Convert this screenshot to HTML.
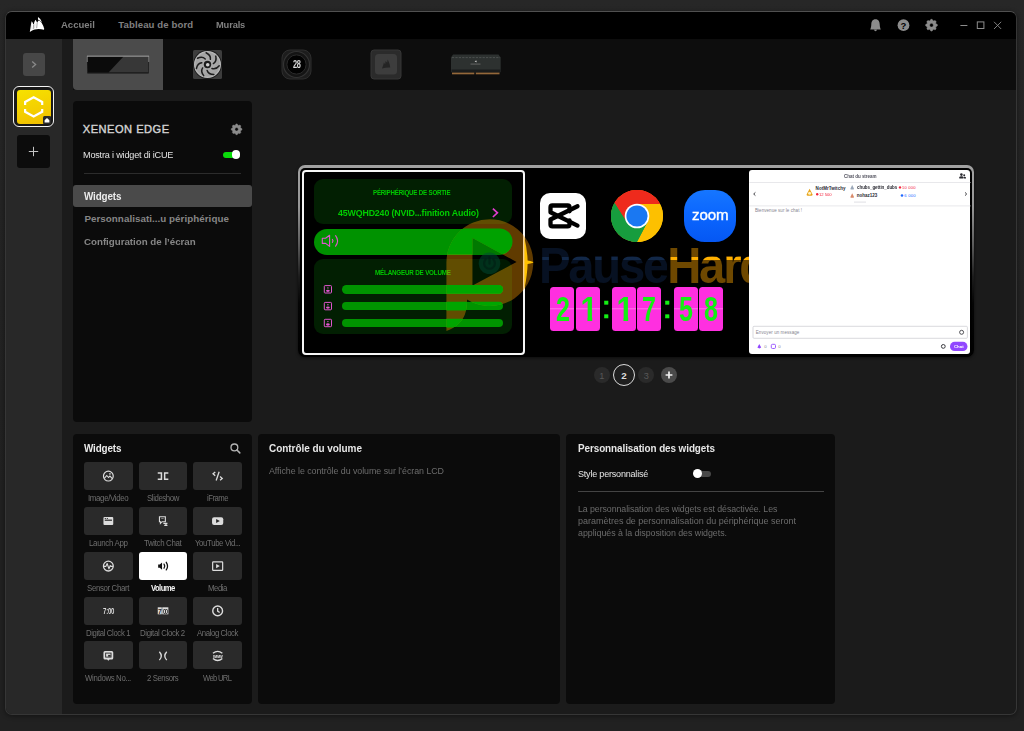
<!DOCTYPE html>
<html lang="fr">
<head>
<meta charset="utf-8">
<title>iCUE - XENEON EDGE</title>
<style>
*{box-sizing:border-box;margin:0;padding:0}
html,body{width:1024px;height:731px;overflow:hidden}
body{position:relative;background:linear-gradient(#272727 0,#242424 200px,#212121 500px,#212121 731px);font-family:"Liberation Sans",sans-serif;color:#fff}
.a{position:absolute}
.t{position:absolute;white-space:nowrap;transform-origin:0 50%}
#win{left:5.4px;top:11px;width:1011.6px;height:704px;border-radius:7px;background:#1b1b1b;border:1px solid #363636;border-top-color:#505050;overflow:hidden;box-shadow:0 1px 5px rgba(0,0,0,.45)}
#titlebar{left:0;top:0;width:1010px;height:27px;background:#000}
#sidebar{left:0;top:27px;width:55.6px;height:676px;background:#282828}
#tabs{left:66.6px;top:27px;width:944px;height:51px;background:#0d0d0d}
#tabsel{left:66.6px;top:27px;width:90px;height:51px;background:#4b4b4b;border-radius:0 0 0 4px}
.panel{background:#0b0b0b;border-radius:4px}
.tile{background:#2a2a2a;border-radius:3px;width:48.5px;height:28px}
.tile.sel{background:#fff}
svg{position:absolute;overflow:visible}
.fc{top:286.8px;width:24.1px;height:44.5px;border-radius:3.5px;background:linear-gradient(#ff2fe0 0,#ff2fe0 48%,#ff6ae8 49%,#ff6ae8 50.5%,#ff2fe0 51.5%,#ff2fe0 100%)}
.dg{position:absolute;top:291.6px;margin-left:.4px;width:24.2px;white-space:nowrap;color:#14ee14;font-weight:700;font-size:35.8px;line-height:1;transform-origin:50% 50%;transform:scaleX(.70);text-align:center}
.dg.one{transform:scaleX(.86);clip-path:polygon(0 0,100% 0,100% 25.3px,15.7px 25.3px,15.7px 100%,10.2px 100%,10.2px 25.3px,0 25.3px)}
.wm{font-weight:700;font-size:49.7px;line-height:1;letter-spacing:-2.3px;white-space:nowrap;width:400px;height:50px;transform:scaleX(.95);transform-origin:0 50%}
.wp{color:transparent;background:linear-gradient(#071122 0,#071122 18.5px,#122848 19px,#122848 21.6px,#071122 22.1px,#071122 50px);-webkit-background-clip:text;background-clip:text}
.wh{color:transparent;background:linear-gradient(#6e4800 0,#6e4800 18.5px,#ffb000 19px,#ffb000 21.6px,#6e4800 22.1px,#6e4800 50px);-webkit-background-clip:text;background-clip:text}

</style>
</head>
<body>
<!-- ============ iCUE window chrome ============ -->
<div id="win" class="a">
  <div id="titlebar" class="a"></div>
  <div id="sidebar" class="a"></div>
  <div id="tabs" class="a"></div>
  <div id="tabsel" class="a"></div>
</div>

<!-- ============ title bar ============ -->
<header>
<!-- title bar: logo + window controls -->
<svg style="left:0;top:0" width="1024" height="40" viewBox="0 0 1024 40">
  <g fill="#fff">
    <path d="M29.8 32 L30.9 25 L31.6 21.2 Q32.8 22.4 33.3 24.3 L33.9 24 Q34.3 21.6 35.4 19.7 Q36.5 20.8 37 22.4 L37.4 22.5 Q37.8 21.4 38.5 20.5 Q40.4 21 41.6 22.8 Q43.3 25.5 44.2 28.8 L44 29.8 Q39 28.5 34.6 29.5 Q32 30.3 29.8 32 Z"/>
    <path d="M38 17 Q40.8 18.6 42.1 22.4 Q40 20.6 38.2 19.8 Q37.8 18.4 38 17 Z"/>
  </g>
  <path d="M33.7 24.4 L33.2 29.2 M37.2 22.8 L36.7 28.2" stroke="#000" stroke-opacity=".6" stroke-width=".6" fill="none"/>
  <path d="M31.2 24.4 L30.9 29.6 M35 23.4 L34.7 28.4" stroke="#000" stroke-opacity=".3" stroke-width=".5" fill="none"/>
  <!-- bell -->
  <path d="M875.5 19.3 C878.4 19.3 879.6 21.6 879.7 24.2 C879.8 26.6 880.2 28 880.8 29.4 H870.2 C870.8 28 871.2 26.6 871.3 24.2 C871.4 21.6 872.6 19.3 875.5 19.3 Z M874.1 29.8 H876.9 C876.8 30.7 876.2 31.2 875.5 31.2 C874.8 31.2 874.2 30.7 874.1 29.8 Z" fill="#8c8c8c"/>
  <!-- help -->
  <circle cx="903.5" cy="25.2" r="5.9" fill="#8c8c8c"/>
  <!-- gear -->
  <g transform="translate(931.5 25.2)" fill="#8c8c8c" stroke="#8c8c8c" stroke-width=".5" stroke-linejoin="round">
    <path fill-rule="evenodd" d="M-0.62 -5.87 L0.62 -5.87 L1.72 -4.16 L3.71 -4.59 L4.59 -3.71 L4.16 -1.72 L5.87 -0.62 L5.87 0.62 L4.16 1.72 L4.59 3.71 L3.71 4.59 L1.72 4.16 L0.62 5.87 L-0.62 5.87 L-1.72 4.16 L-3.71 4.59 L-4.59 3.71 L-4.16 1.72 L-5.87 0.62 L-5.87 -0.62 L-4.16 -1.72 L-4.59 -3.71 L-3.71 -4.59 L-1.72 -4.16 Z M0 -1.9 A1.9 1.9 0 1 0 0 1.9 A1.9 1.9 0 1 0 0 -1.9 Z"/>
  </g>
  <!-- window controls -->
  <path d="M960.4 25.5 H967.4" stroke="#8c8c8c" stroke-width="1"/>
  <rect x="977.3" y="21.9" width="6.6" height="6.6" fill="none" stroke="#8c8c8c" stroke-width="1"/>
  <path d="M994 21.8 L1001.2 29 M1001.2 21.8 L994 29" stroke="#8c8c8c" stroke-width=".9"/>
</svg>
<nav>
<a class="t" style="left:61.30px;top:20px;color:#808080;font-family:'Liberation Sans', sans-serif;font-size:9.6px;font-weight:700;letter-spacing:-0.026px;white-space:nowrap;line-height:1;transform:scaleX(0.9945);">Accueil</a>
<a class="t" style="left:118.30px;top:20px;color:#808080;font-family:'Liberation Sans', sans-serif;font-size:9.6px;font-weight:700;letter-spacing:0.101px;white-space:nowrap;line-height:1;">Tableau de bord</a>
<a class="t" style="left:216.30px;top:20px;color:#808080;font-family:'Liberation Sans', sans-serif;font-size:9.6px;font-weight:700;letter-spacing:-0.152px;white-space:nowrap;line-height:1;transform:scaleX(0.9709);">Murals</a>
</nav>
<span class="t" style="left:900.59px;top:21px;color:#000;font-family:'Liberation Sans', sans-serif;font-size:9.5px;font-weight:700;letter-spacing:0.000px;white-space:nowrap;line-height:1;">?</span>
</header>

<!-- ============ left rail ============ -->
<aside>
<!-- sidebar buttons -->
<div class="a" style="left:23px;top:53px;width:22px;height:23px;border-radius:3px;background:#474747"></div>
<svg style="left:23px;top:53px" width="22" height="23" viewBox="0 0 22 23"><path d="M9.2 8.6 L12.6 11.5 L9.2 14.4" fill="none" stroke="#8a8a8a" stroke-width="1.3"/></svg>
<div class="a" style="left:13px;top:85.7px;width:41.1px;height:41.4px;border-radius:6px;border:1.7px solid #f4f4f4;background:#191919"></div>
<div class="a" style="left:17px;top:89.7px;width:34px;height:34px;border-radius:3px;background:linear-gradient(165deg,#f6e200 0%,#f4cf00 55%,#f0bd00 100%)"></div>
<svg style="left:17px;top:89.7px" width="34" height="34" viewBox="0 0 34 34">
  <path d="M8.1 14.9 V12 L16.65 7.3 L25.2 12 V14.9 M25.2 18.9 V21.8 L16.65 26.5 L8.1 21.8 V18.9" fill="none" stroke="#fff" stroke-width="2.2" stroke-linejoin="miter"/>
  <path d="M26 34 L34 26 V31 Q34 34 31 34 Z" fill="#2a2a2a"/>
  <rect x="26" y="26" width="8" height="8" rx="1.5" fill="#2a2a2a"/>
  <path d="M27.6 30.2 L30 28 L32.4 30.2 V32.6 H27.6 Z" fill="#fff"/>
</svg>
<div class="a" style="left:17px;top:135px;width:33px;height:33px;border-radius:3px;background:#0c0c0c"></div>
<svg style="left:17px;top:135px" width="33" height="33" viewBox="0 0 33 33"><path d="M16.5 11.8 V21.2 M11.8 16.5 H21.2" stroke="#c4c4c4" stroke-width="1"/></svg>
</aside>

<!-- ============ device tabs ============ -->
<nav>
<!-- device tabs -->
<svg style="left:0;top:39px" width="1024" height="51" viewBox="0 39 1024 51">
  <defs>
    <radialGradient id="fan" cx=".5" cy=".5" r=".5"><stop offset="0" stop-color="#b0b0b0"/><stop offset=".85" stop-color="#a2a2a2"/><stop offset="1" stop-color="#c0c0c0"/></radialGradient>
  </defs>
  <!-- XENEON EDGE monitor -->
  <path d="M87 56 H149 L148.6 73.3 H87.4 Z" fill="#0b0b0b"/>
  <path d="M123.5 56.6 H148.6 L148.2 72.6 H108.5 Z" fill="#373737"/>
  <path d="M87 56.2 H149" stroke="#b8b8b8" stroke-width=".9"/>
  <path d="M87.3 56 V62 M148.7 56 V62" stroke="#999" stroke-width=".7"/>
  <path d="M87.4 73 H148.6" stroke="#222" stroke-width=".9"/>
  <!-- fan -->
  <rect x="193" y="50" width="29" height="29" rx="1.5" fill="#3d3d3d"/>
  <circle cx="207.5" cy="64.5" r="14.4" fill="#1b1b1b"/>
  <circle cx="207.5" cy="64.5" r="13.5" fill="url(#fan)"/>
  <g transform="translate(207.5 64.5)" fill="none" stroke="#1d1d1d" stroke-width="1.5" stroke-linecap="round">
    <path d="M-1.4 -11.7 Q3.4 -9.4 2.9 -5.2" transform="rotate(0.0)"/>
    <path d="M-1.4 -11.7 Q3.4 -9.4 2.9 -5.2" transform="rotate(51.4)"/>
    <path d="M-1.4 -11.7 Q3.4 -9.4 2.9 -5.2" transform="rotate(102.9)"/>
    <path d="M-1.4 -11.7 Q3.4 -9.4 2.9 -5.2" transform="rotate(154.3)"/>
    <path d="M-1.4 -11.7 Q3.4 -9.4 2.9 -5.2" transform="rotate(205.7)"/>
    <path d="M-1.4 -11.7 Q3.4 -9.4 2.9 -5.2" transform="rotate(257.1)"/>
    <path d="M-1.4 -11.7 Q3.4 -9.4 2.9 -5.2" transform="rotate(308.6)"/>
  </g>
  <circle cx="207.5" cy="64.5" r="3.7" fill="#1c1c1c"/>
  <circle cx="207.7" cy="64.7" r="1.8" fill="#d0d0d0"/>
  <!-- LCD cooler -->
  <rect x="282" y="50" width="29" height="29" rx="8" fill="#1d1d1d" stroke="#2e2e2e" stroke-width="1"/>
  <circle cx="296.5" cy="64.5" r="13" fill="#141414" stroke="#333" stroke-width="1.2"/>
  <circle cx="296.5" cy="64.5" r="9.6" fill="#020202" stroke="#2a2a2a" stroke-width="1"/>
  <!-- keycap -->
  <rect x="371" y="50" width="30" height="29" rx="3" fill="#2b2b2b" stroke="#363636" stroke-width="1"/>
  <rect x="375" y="54" width="22" height="20.5" rx="3.5" fill="#3d3d3d"/>
  <path d="M382 68.5 C383 66 383.5 64.5 383.8 62.5 L385.2 64.2 L385.6 61 L387.2 62.8 L387.6 59.6 C389.2 62 390 65 390.2 67.6 C387.5 67.4 384.5 67.8 382 68.5 Z" fill="#242424"/>
  <!-- RAM -->
  <path d="M453 54.5 H498.5 L500.7 57.5 V72 H451 V57.5 Z" fill="#2d3130"/>
  <path d="M452 57.6 H500" stroke="#4c504f" stroke-width="1" stroke-dasharray="2.2 1.2"/>
  <rect x="451.5" y="69.5" width="49" height="3.2" fill="#1a1c1c"/>
  <rect x="452" y="72.6" width="22.3" height="1.7" fill="#94683a"/>
  <rect x="475.8" y="72.6" width="23.7" height="1.7" fill="#94683a"/>
  <path d="M474.6 61.8 l1.6 -1.5 l.7 2 z" fill="#c4c4c4"/>
  <rect x="470.5" y="63.7" width="10" height=".7" fill="#7a7a7a"/>
</svg>
<span class="t" style="left:292.70px;top:59px;color:#d8d8d8;font-family:'Liberation Sans', sans-serif;font-size:10.8px;font-weight:700;letter-spacing:-0.616px;white-space:nowrap;line-height:1;transform:scaleX(0.6842);">28</span>
</nav>

<!-- ============ device menu panel ============ -->
<section>
<div class="a panel" style="left:73px;top:101px;width:179px;height:321px"></div>
<div class="a" style="left:83.5px;top:173px;width:157px;height:1px;background:#2c2c2c"></div>
<div class="a" style="left:73px;top:185px;width:179px;height:22px;border-radius:3px;background:#4a4a4a"></div>
<div class="a" style="left:223px;top:151.5px;width:17px;height:6px;border-radius:3px;background:#0adc0a"></div>
<div class="a" style="left:231.8px;top:150.1px;width:8.6px;height:8.7px;border-radius:50%;background:#fff"></div>
<svg style="left:0;top:0" width="1024" height="731" viewBox="0 0 1024 731">
  <g transform="translate(236.6 129.3) scale(.92)" fill="#8a8a8a" stroke="#8a8a8a" stroke-width=".5" stroke-linejoin="round">
    <path fill-rule="evenodd" d="M-0.62 -5.87 L0.62 -5.87 L1.72 -4.16 L3.71 -4.59 L4.59 -3.71 L4.16 -1.72 L5.87 -0.62 L5.87 0.62 L4.16 1.72 L4.59 3.71 L3.71 4.59 L1.72 4.16 L0.62 5.87 L-0.62 5.87 L-1.72 4.16 L-3.71 4.59 L-4.59 3.71 L-4.16 1.72 L-5.87 0.62 L-5.87 -0.62 L-4.16 -1.72 L-4.59 -3.71 L-3.71 -4.59 L-1.72 -4.16 Z M0 -1.9 A1.9 1.9 0 1 0 0 1.9 A1.9 1.9 0 1 0 0 -1.9 Z"/>
  </g>
</svg>
<h1 class="t" style="left:82.80px;top:124px;color:#d4d4d4;font-family:'Liberation Sans', sans-serif;font-size:11.1px;font-weight:400;letter-spacing:0.492px;white-space:nowrap;line-height:1;-webkit-text-stroke:.4px #d4d4d4;">XENEON EDGE</h1>
<label class="t" style="left:82.60px;top:150px;color:#e4e4e4;font-family:'Liberation Sans', sans-serif;font-size:9.6px;font-weight:400;letter-spacing:-0.201px;white-space:nowrap;line-height:1;transform:scaleX(0.9487);">Mostra i widget di iCUE</label>
<a class="t" style="left:84.20px;top:192px;color:#ececec;font-family:'Liberation Sans', sans-serif;font-size:10.1px;font-weight:700;letter-spacing:-0.128px;white-space:nowrap;line-height:1;transform:scaleX(0.9765);">Widgets</a>
<a class="t" style="left:84.40px;top:214px;color:#868686;font-family:'Liberation Sans', sans-serif;font-size:9.8px;font-weight:700;letter-spacing:0.044px;white-space:nowrap;line-height:1;">Personnalisati...u périphérique</a>
<a class="t" style="left:84.40px;top:237px;color:#868686;font-family:'Liberation Sans', sans-serif;font-size:9.8px;font-weight:700;letter-spacing:-0.019px;white-space:nowrap;line-height:1;transform:scaleX(0.9952);">Configuration de l’écran</a>
</section>

<!-- ============ screen preview ============ -->
<main>
<!-- preview frame -->
<div class="a" style="left:298.2px;top:165.1px;width:675.8px;height:192.2px;border-radius:7px;background:linear-gradient(#a2a2a2 0,#969696 22%,#5a5a5a 42%,#1c1c1c 58%,#050505 72%,#000 100%);box-shadow:0 1px 3px rgba(0,0,0,.55)"></div>
<div class="a" style="left:300.2px;top:167.5px;width:671.8px;height:189.3px;border-radius:5px;background:#000"></div>

<!-- ===== preview: widget 1 (volume) ===== -->
<div class="a" style="left:314.2px;top:179px;width:198.3px;height:44.5px;border-radius:9px;background:#021f02"></div>
<div class="a" style="left:314.2px;top:228.5px;width:198.3px;height:26px;border-radius:13px;background:#009200"></div>
<div class="a" style="left:314.2px;top:259px;width:198.3px;height:75px;border-radius:9px;background:#021f02"></div>
<div class="a" style="left:342.3px;top:285px;width:160.8px;height:8.7px;border-radius:4.4px;background:#009400"></div>
<div class="a" style="left:342.3px;top:301.8px;width:160.8px;height:8.7px;border-radius:4.4px;background:#009400"></div>
<div class="a" style="left:342.3px;top:318.7px;width:160.8px;height:8.7px;border-radius:4.4px;background:#009400"></div>
<svg style="left:0;top:0" width="1024" height="731" viewBox="0 0 1024 731">
  <!-- speaker -->
  <g fill="none" stroke="#e255cf" stroke-width="1.1" stroke-linejoin="round" stroke-linecap="round">
    <path d="M322.3 238.3 H325.6 L329.6 235.3 V246.4 L325.6 243.4 H322.3 Z"/>
    <path d="M332.4 239.4 Q333.6 240.9 332.4 242.4"/>
    <path d="M335.6 235.6 Q339.6 240.9 335.6 246.2"/>
  </g>
  <!-- chevron -->
  <path d="M492.9 208.6 L497.4 212.8 L492.9 217" fill="none" stroke="#e23ccf" stroke-width="1.7"/>
  <!-- mixer app icons -->
  <g fill="none" stroke="#e255cf" stroke-width="1">
    <rect x="324.3" y="285.6" width="7.2" height="7.4" rx=".8"/>
    <rect x="324.3" y="302.4" width="7.2" height="7.4" rx=".8"/>
    <rect x="324.3" y="319.3" width="7.2" height="7.4" rx=".8"/>
  </g>
  <g fill="#e255cf">
    <circle cx="327.9" cy="287.9" r=".7"/><ellipse cx="327.9" cy="290.8" rx="1.9" ry="1.15"/>
    <circle cx="327.9" cy="304.7" r=".7"/><ellipse cx="327.9" cy="307.6" rx="1.9" ry="1.15"/>
    <circle cx="327.9" cy="321.6" r=".7"/><ellipse cx="327.9" cy="324.5" rx="1.9" ry="1.15"/>
  </g>
</svg>
<div class="t" style="left:373.45px;top:190px;color:#00c800;font-family:'Liberation Sans', sans-serif;font-size:6.6px;font-weight:700;letter-spacing:-0.221px;white-space:nowrap;line-height:1;transform:scaleX(0.9388);">PÉRIPHÉRIQUE DE SORTIE</div>
<div class="t" style="left:338.30px;top:209px;color:#00cc00;font-family:'Liberation Sans', sans-serif;font-size:9.2px;font-weight:700;letter-spacing:-0.158px;white-space:nowrap;line-height:1;transform:scaleX(0.9610);">45WQHD240 (NVID...finition Audio)</div>
<div class="t" style="left:375.30px;top:270px;color:#00c800;font-family:'Liberation Sans', sans-serif;font-size:6.6px;font-weight:700;letter-spacing:-0.198px;white-space:nowrap;line-height:1;transform:scaleX(0.9504);">MÉLANGEUR DE VOLUME</div>
<!-- selected widget outline -->
<div class="a" style="left:302px;top:169.6px;width:223px;height:185.2px;border-radius:4px;border:2px solid #f6f6f6"></div>

<!-- ===== preview: widget 2 (apps + flip clock) ===== -->
<div class="a" style="left:540px;top:192.5px;width:46.3px;height:46.3px;border-radius:10px;background:#fff"></div>
<svg style="left:539.4px;top:192.5px" width="46.3" height="46.3" viewBox="0 0 46.3 46.3">
  <g fill="none" stroke="#000" stroke-width="4.3" stroke-linejoin="round" stroke-linecap="round">
    <path d="M38.5 13.2 L11.5 26.5 V31.5 Q11.5 33.3 13.3 33.3 H28.7 Q30.5 33.3 30.5 31.5 V27.5"/>
    <path d="M38.5 32.6 L11.5 19.3 V14.3 Q11.5 12.5 13.3 12.5 H28.7 Q30.5 12.5 30.5 14.3 V18.3"/>
  </g>
</svg>
<svg style="left:611px;top:189.7px" width="52" height="52" viewBox="-26 -26 52 52">
  <circle r="26" fill="#fdc000"/>
  <path d="M0 0 L-22.52 -13 A26 26 0 0 1 22.52 -13 Z" fill="#ee2a1c"/>
  <path d="M0 0 L-22.52 -13 A26 26 0 0 0 0 26 L12 5 Z" fill="#179d3e"/>
  <path d="M0 0 L22.52 -13 H0 Z" fill="#ee2a1c"/>
  <path d="M-22.52 -13 L-10.4 8 L0 0 Z" fill="#179d3e"/>
  <path d="M0 -12 H23.1 A26 26 0 0 1 0 26 L10.4 6 Z" fill="#fdc000"/>
  <path d="M0 -12 L-10.4 6 L-22.52 -13 A26 26 0 0 1 22.52 -13 L23.1 -12 Z" fill="#ee2a1c"/>
  <path d="M-10.4 6 L10.4 6 L0 26 A26 26 0 0 1 -22.52 -13 Z" fill="#179d3e"/>
  <circle r="12.3" fill="#fff"/>
  <circle r="10.6" fill="#1a78f2"/>
</svg>
<div class="a" style="left:683.7px;top:190px;width:52.5px;height:52px;border-radius:21px;background:linear-gradient(#1676ff,#0b67ff 45%,#0557f3)"></div>

<!-- flip clock -->
<div class="a fc" style="left:550.4px"></div><div class="a fc" style="left:575.7px"></div>
<div class="a fc" style="left:612px"></div><div class="a fc" style="left:637.1px"></div>
<div class="a fc" style="left:673.5px"></div><div class="a fc" style="left:698.9px"></div>

<div class="dg" style="left:550.4px">2</div>
<div class="dg one" style="left:576.6px">1</div>
<div class="dg one" style="left:612.9px">1</div>
<div class="dg" style="left:637.1px">7</div>
<div class="dg" style="left:673.5px">5</div>
<div class="dg" style="left:698.9px">8</div>
<span class="t" style="left:601.90px;top:293px;color:#15ee15;font-family:'Liberation Sans', sans-serif;font-size:30.9px;font-weight:400;letter-spacing:0.000px;white-space:nowrap;line-height:1;transform:scaleX(1.22);transform-origin:50% 50%;-webkit-text-stroke:.4px #15ee15;">:</span>
<span class="t" style="left:663.40px;top:293px;color:#15ee15;font-family:'Liberation Sans', sans-serif;font-size:30.9px;font-weight:400;letter-spacing:0.000px;white-space:nowrap;line-height:1;transform:scaleX(1.22);transform-origin:50% 50%;-webkit-text-stroke:.4px #15ee15;">:</span>
<span class="t" style="left:691.80px;top:207px;color:#fff;font-family:'Liberation Sans', sans-serif;font-size:15.3px;font-weight:400;letter-spacing:-0.122px;white-space:nowrap;line-height:1;transform:scaleX(0.9881);-webkit-text-stroke:.4px #fff;">zoom</span>

<!-- ===== watermark (PauseHardware) ===== -->
<svg style="left:0;top:0;z-index:5" width="1024" height="731" viewBox="0 0 1024 731">
  <defs>
    <clipPath id="wmP"><path clip-rule="evenodd" d="M489.8 219.2 A43.4 43.4 0 1 1 467 299.5 C467 312 465 324 446.4 331 V262.6 A43.4 43.4 0 0 1 489.8 219.2 Z M472.5 238 V285.5 L516.5 262 Z"/></clipPath>
    <clipPath id="wmIn"><rect x="299" y="165" width="451" height="192"/></clipPath>
  </defs>
  <g clip-path="url(#wmIn)">
    <g clip-path="url(#wmP)">
      <rect x="440" y="215" width="100" height="120" fill="#f09400" fill-opacity=".4"/>
      <!-- brighter greens where the mark crosses the volume bars -->
      <rect x="314.2" y="228.5" width="198.3" height="26" rx="13" fill="#00a200"/>
      <rect x="342.3" y="285" width="160.8" height="8.7" rx="4.35" fill="#00a600"/>
      <rect x="342.3" y="301.8" width="160.8" height="8.7" rx="4.35" fill="#00a600"/>
      <rect x="342.3" y="318.7" width="160.8" height="8.7" rx="4.35" fill="#00a600"/>
      <path d="M524.4 237.5 Q527.4 251 527.6 260.6 Q530 260.9 534.5 262.3 Q530 263.7 527.6 264 Q527.4 274 524.4 289 Z" fill="#ffc200"/>
    </g>
    <path d="M472.5 238 V285.5 L516.5 262 Z" fill="#000" fill-opacity=".17"/>
    <circle cx="489.5" cy="263.3" r="10.8" fill="#004a36" fill-opacity=".5"/>
    <path d="M485.6 259.6 A5.4 5.4 0 1 0 493.4 259.6 M489.5 257.4 V263.6" fill="none" stroke="#001c12" stroke-opacity=".55" stroke-width="2.2" stroke-linecap="round"/>
  </g>
</svg>
<div class="a wm" style="left:538.8px;top:242px;z-index:5"><span class="wp">Pause</span><span class="wh">Hardware</span></div>

<!-- ===== preview: widget 3 (Twitch chat) ===== -->
<div class="a" style="left:749.3px;top:169.8px;width:221.2px;height:184.2px;border-radius:3px;background:#fff;z-index:6"></div>
<svg style="left:0;top:0;z-index:7" width="1024" height="731" viewBox="0 0 1024 731">
  <path d="M749.3 182.5 H970.5 M749.3 205.9 H970.5" stroke="#e2e2e6" stroke-width=".8"/>
  <path d="M854 202.1 H866" stroke="#d2d2d8" stroke-width=".7"/>
  <!-- community icon -->
  <g fill="#2a2a30"><circle cx="961.4" cy="174.6" r="1.3"/><path d="M959.3 178.4 V177.3 Q959.3 176.3 961.4 176.3 Q963.5 176.3 963.5 177.3 V178.4 Z"/><circle cx="964.2" cy="175.2" r="1"/><path d="M964 178.4 V176.8 Q966 176.7 966 177.8 V178.4 Z"/></g>
  <!-- arrows -->
  <path d="M755.4 192.4 L753.7 194 L755.4 195.6" fill="none" stroke="#2a2a30" stroke-width=".9"/>
  <path d="M965 192.4 L966.7 194 L965 195.6" fill="none" stroke="#2a2a30" stroke-width=".9"/>
  <!-- badges -->
  <path d="M809.6 188.8 L812.6 194.6 Q812.8 195.7 811.6 195.8 H807.6 Q806.4 195.7 806.6 194.6 Z" fill="#e8a317"/>
  <circle cx="809.6" cy="193.3" r="1.5" fill="#fff4c8"/>
  <path d="M852.2 185 L854 188.7 Q854.1 189.5 853.3 189.5 H851.1 Q850.3 189.5 850.4 188.7 Z" fill="#9aa7b8"/>
  <path d="M852.2 193.2 L854 196.9 Q854.1 197.7 853.3 197.7 H851.1 Q850.3 197.7 850.4 196.9 Z" fill="#d98a6a"/>
  <!-- bits dots -->
  <circle cx="817.2" cy="194.3" r="1.2" fill="#f3253f"/>
  <circle cx="900" cy="187.4" r="1.2" fill="#f3253f"/>
  <circle cx="902" cy="195.5" r="1.3" fill="#1f69ff"/>
  <!-- input -->
  <rect x="753" y="326.3" width="214.4" height="12" rx="1" fill="#fff" stroke="#c8c8cf" stroke-width=".7"/>
  <circle cx="961.6" cy="332.3" r="2" fill="none" stroke="#2a2a30" stroke-width=".8"/>
  <!-- bottom row -->
  <path d="M759.3 344 L761.2 347.4 L759.3 348.6 L757.4 347.4 Z" fill="#9147ff"/>
  <rect x="771.3" y="344.3" width="4.2" height="4.2" rx="1.2" fill="none" stroke="#9147ff" stroke-width=".9"/>
  <circle cx="943.3" cy="346.4" r="1.9" fill="none" stroke="#3a3a40" stroke-width="1"/>
  <rect x="950" y="341.8" width="17.5" height="9.2" rx="4.6" fill="#9147ff"/>
</svg>
<div class="t" style="left:843.80px;top:175px;color:#53535f;font-family:'Liberation Sans', sans-serif;font-size:4.6px;font-weight:700;letter-spacing:-0.030px;white-space:nowrap;line-height:1;transform:scaleX(0.9860);z-index:7;">Chat du stream</div>
<span class="t" style="left:815.60px;top:187px;color:#2a2a33;font-family:'Liberation Sans', sans-serif;font-size:4.5px;font-weight:700;letter-spacing:0.043px;white-space:nowrap;line-height:1;z-index:7;">NotMrTwitchy</span>
<span class="t" style="left:819.20px;top:193px;color:#f3253f;font-family:'Liberation Sans', sans-serif;font-size:4.2px;font-weight:400;letter-spacing:-0.019px;white-space:nowrap;line-height:1;transform:scaleX(0.9909);z-index:7;">12 500</span>
<span class="t" style="left:856.70px;top:186px;color:#2a2a33;font-family:'Liberation Sans', sans-serif;font-size:4.5px;font-weight:700;letter-spacing:-0.028px;white-space:nowrap;line-height:1;transform:scaleX(0.9871);z-index:7;">chubs_gettin_dubs</span>
<span class="t" style="left:902.00px;top:186px;color:#f3253f;font-family:'Liberation Sans', sans-serif;font-size:4.2px;font-weight:400;letter-spacing:0.157px;white-space:nowrap;line-height:1;z-index:7;">10 000</span>
<span class="t" style="left:856.70px;top:194px;color:#2a2a33;font-family:'Liberation Sans', sans-serif;font-size:4.5px;font-weight:700;letter-spacing:0.026px;white-space:nowrap;line-height:1;z-index:7;">nohaz123</span>
<span class="t" style="left:904.30px;top:194px;color:#1f69ff;font-family:'Liberation Sans', sans-serif;font-size:4.2px;font-weight:400;letter-spacing:0.204px;white-space:nowrap;line-height:1;z-index:7;">6 000</span>
<p class="t" style="left:755.00px;top:209px;color:#85858f;font-family:'Liberation Sans', sans-serif;font-size:4.5px;font-weight:400;letter-spacing:0.055px;white-space:nowrap;line-height:1;z-index:7;">Bienvenue sur le chat !</p>
<span class="t" style="left:755.80px;top:331px;color:#85858f;font-family:'Liberation Sans', sans-serif;font-size:4.5px;font-weight:400;letter-spacing:0.072px;white-space:nowrap;line-height:1;z-index:7;">Envoyer un message</span>
<span class="t" style="left:764.20px;top:345px;color:#85858f;font-family:'Liberation Sans', sans-serif;font-size:4.3px;font-weight:400;letter-spacing:0.000px;white-space:nowrap;line-height:1;z-index:7;">0</span>
<span class="t" style="left:778.30px;top:345px;color:#85858f;font-family:'Liberation Sans', sans-serif;font-size:4.3px;font-weight:400;letter-spacing:0.000px;white-space:nowrap;line-height:1;z-index:7;">0</span>
<span class="t" style="left:954.00px;top:345px;color:#fff;font-family:'Liberation Sans', sans-serif;font-size:4.4px;font-weight:700;letter-spacing:-0.025px;white-space:nowrap;line-height:1;transform:scaleX(0.9907);z-index:7;">Chat</span>
</main>

<nav>
<!-- ===== pager ===== -->
<div class="a" style="left:593.7px;top:367.3px;width:16px;height:16px;border-radius:50%;background:#2a2a2a"></div>
<div class="a" style="left:612.9px;top:364.2px;width:22.2px;height:22.2px;border-radius:50%;background:#1f1f1f;border:1.1px solid #dadada"></div>
<div class="a" style="left:638.4px;top:367.3px;width:16px;height:16px;border-radius:50%;background:#2a2a2a"></div>
<div class="a" style="left:660.7px;top:367.3px;width:16px;height:16px;border-radius:50%;background:#4a4a4a"></div>
<svg style="left:660.7px;top:367.3px" width="16" height="16" viewBox="0 0 16 16"><path d="M8 4.6 V11.4 M4.6 8 H11.4" stroke="#f0f0f0" stroke-width="1.7"/></svg>
<span class="t" style="left:599.14px;top:372px;color:#585858;font-family:'Liberation Sans', sans-serif;font-size:9.2px;font-weight:400;letter-spacing:0.000px;white-space:nowrap;line-height:1;">1</span>
<span class="t" style="left:621.27px;top:371px;color:#dcdcdc;font-family:'Liberation Sans', sans-serif;font-size:9.8px;font-weight:700;letter-spacing:0.000px;white-space:nowrap;line-height:1;">2</span>
<span class="t" style="left:643.84px;top:372px;color:#585858;font-family:'Liberation Sans', sans-serif;font-size:9.2px;font-weight:400;letter-spacing:0.000px;white-space:nowrap;line-height:1;">3</span>
</nav>

<!-- ============ widget picker ============ -->
<section>
<div class="a panel" style="left:73px;top:434px;width:179px;height:269.5px"></div>
<svg style="left:0;top:0" width="1024" height="731" viewBox="0 0 1024 731">
  <circle cx="234.4" cy="447.4" r="3.4" fill="none" stroke="#b4b4b4" stroke-width="1.3"/>
  <path d="M236.9 450 L239.8 452.9" stroke="#b4b4b4" stroke-width="1.5" stroke-linecap="round"/>
</svg>
<!-- ===== widget tiles ===== -->
<div class="a tile" style="left:84.1px;top:462.1px"></div>
<div class="a tile" style="left:138.8px;top:462.1px"></div>
<div class="a tile" style="left:193.4px;top:462.1px"></div>
<div class="a tile" style="left:84.1px;top:507.0px"></div>
<div class="a tile" style="left:138.8px;top:507.0px"></div>
<div class="a tile" style="left:193.4px;top:507.0px"></div>
<div class="a tile" style="left:84.1px;top:551.9px"></div>
<div class="a tile sel" style="left:138.8px;top:551.9px"></div>
<div class="a tile" style="left:193.4px;top:551.9px"></div>
<div class="a tile" style="left:84.1px;top:596.7px"></div>
<div class="a tile" style="left:138.8px;top:596.7px"></div>
<div class="a tile" style="left:193.4px;top:596.7px"></div>
<div class="a tile" style="left:84.1px;top:641.4px"></div>
<div class="a tile" style="left:138.8px;top:641.4px"></div>
<div class="a tile" style="left:193.4px;top:641.4px"></div>

<!-- widget tile icons -->
<svg style="left:0;top:0" width="1024" height="731" viewBox="0 0 1024 731">
<g transform="translate(108.35 476.10)"><circle r="4.9" fill="none" stroke="#dcdcdc" stroke-width="1.2"/><path d="M-4 2.2 L-1.6 -0.6 L0.2 1.4 L1.6 0 L4 2.6" fill="none" stroke="#dcdcdc" stroke-width="1.1"/><circle cx="1.6" cy="-2.2" r=".8" fill="#dcdcdc"/></g>
<g transform="translate(163.05 476.10)"><path d="M-5.3 -3.2 H-1.6 V3.2 H-5.3 M5.3 -3.2 H1.6 V3.2 H5.3" fill="none" stroke="#dcdcdc" stroke-width="1.5"/></g>
<g transform="translate(217.65 476.10)"><path d="M-2.4 -4.2 L-4.6 -2.3 L-2.4 -0.4 M2.4 0.4 L4.6 2.3 L2.4 4.2 M1.5 -4.4 L-1.5 4.4" fill="none" stroke="#dcdcdc" stroke-width="1.3"/></g>
<g transform="translate(108.35 521.10)"><rect x="-4.9" y="-4" width="9.8" height="8" rx="1" fill="#dcdcdc"/><rect x="-3.6" y="-1.5" width="7.2" height="1.2" fill="#2a2a2a"/><rect x="-3.6" y="-3" width="1.2" height=".9" fill="#2a2a2a"/><rect x="-1.6" y="-3" width="1.2" height=".9" fill="#2a2a2a"/></g>
<g transform="translate(163.05 521.10)"><path d="M-3.6 -4.3 H2.3 V0.6 H-1 L-2.6 2.2 V0.6 H-3.6 Z" fill="none" stroke="#dcdcdc" stroke-width="1.1"/><path d="M0.3 2.2 H4.4 M1.2 4.3 H4.4 M2.9 2.2 V4.3" stroke="#dcdcdc" stroke-width="1.3"/><path d="M-1.8 -2.6 H0.6" stroke="#dcdcdc" stroke-width=".7" opacity=".7"/></g>
<g transform="translate(217.65 521.10)"><rect x="-5.6" y="-3.9" width="11.2" height="7.8" rx="2" fill="#dcdcdc"/><path d="M-1.5 -2 L2.2 0 L-1.5 2 Z" fill="#2a2a2a"/></g>
<g transform="translate(108.35 566.10)"><circle r="4.9" fill="none" stroke="#dcdcdc" stroke-width="1.3"/><path d="M-4.6 0.3 H-2.4 L-1.2 -2.6 L0.6 2.8 L1.9 -0.6 L2.6 0.3 H4.6" fill="none" stroke="#dcdcdc" stroke-width="1.1" stroke-linejoin="round"/></g>
<g transform="translate(163.05 566.10)"><path d="M-4.9 -1.6 H-3.3 L-1 -3.6 V3.6 L-3.3 1.6 H-4.9 Z" fill="#111"/><path d="M1 -2 Q2.4 0 1 2" fill="none" stroke="#111" stroke-width="1.3" stroke-linecap="round"/><path d="M3.2 -3.8 Q5.8 0 3.2 3.8" fill="none" stroke="#111" stroke-width="1.3" stroke-linecap="round"/></g>
<g transform="translate(217.65 566.10)"><rect x="-5" y="-4.2" width="10" height="8.4" rx=".6" fill="none" stroke="#dcdcdc" stroke-width="1.2"/><path d="M-1.5 -2.2 L2.2 0 L-1.5 2.2 Z" fill="#dcdcdc"/></g>
<g transform="translate(163.05 610.90)"><rect x="-5.3" y="-3.6" width="4" height="7" fill="#dcdcdc"/><rect x="-0.8" y="-3.6" width="6.1" height="7" fill="#dcdcdc"/></g>
<g transform="translate(217.65 610.90)"><circle r="4.9" fill="none" stroke="#dcdcdc" stroke-width="1.4"/><path d="M0 -2.9 V0.2 L2 1.6" fill="none" stroke="#dcdcdc" stroke-width="1.3"/></g>
<g transform="translate(108.35 655.90)"><path d="M-3.4 -5 H3.4 Q4.9 -5 4.9 -3.5 V2 Q4.9 3.5 3.4 3.5 H1.2 L0 4.9 L-1.2 3.5 H-3.4 Q-4.9 3.5 -4.9 2 V-3.5 Q-4.9 -5 -3.4 -5 Z" fill="#dcdcdc"/><rect x="-2.7" y="-2.8" width="5.4" height="4" fill="none" stroke="#2a2a2a" stroke-width=".9"/><rect x="-0.2" y="-1" width="2.5" height="1.8" fill="#2a2a2a"/></g>
<g transform="translate(163.05 655.90)"><path d="M-3.7 -4.2 Q0.2 0 -3.7 4.2 M3.7 -4.2 Q-0.2 0 3.7 4.2" fill="none" stroke="#dcdcdc" stroke-width="1.3"/></g>
<g transform="translate(217.65 655.90)"><path d="M-4.7 -2.6 Q0 -6.6 4.7 -2.6 M-4.7 2.6 Q0 6.6 4.7 2.6" fill="none" stroke="#dcdcdc" stroke-width="1.3"/></g>
</svg>
<h2 class="t" style="left:84.20px;top:444px;color:#ececec;font-family:'Liberation Sans', sans-serif;font-size:10.1px;font-weight:700;letter-spacing:-0.128px;white-space:nowrap;line-height:1;transform:scaleX(0.9765);">Widgets</h2>
<div class="t" style="left:87.95px;top:494px;color:#6e6e6e;font-family:'Liberation Sans', sans-serif;font-size:8.7px;font-weight:400;letter-spacing:-0.392px;white-space:nowrap;line-height:1;transform:scaleX(0.9104);">Image/Video</div>
<div class="t" style="left:146.80px;top:494px;color:#6e6e6e;font-family:'Liberation Sans', sans-serif;font-size:8.7px;font-weight:400;letter-spacing:-0.451px;white-space:nowrap;line-height:1;transform:scaleX(0.8999);">Slideshow</div>
<div class="t" style="left:206.80px;top:494px;color:#6e6e6e;font-family:'Liberation Sans', sans-serif;font-size:8.7px;font-weight:400;letter-spacing:-0.550px;white-space:nowrap;line-height:1;transform:scaleX(0.8895);">iFrame</div>
<div class="t" style="left:88.80px;top:539px;color:#6e6e6e;font-family:'Liberation Sans', sans-serif;font-size:8.7px;font-weight:400;letter-spacing:-0.376px;white-space:nowrap;line-height:1;transform:scaleX(0.9173);">Launch App</div>
<div class="t" style="left:144.15px;top:539px;color:#6e6e6e;font-family:'Liberation Sans', sans-serif;font-size:8.7px;font-weight:400;letter-spacing:-0.382px;white-space:nowrap;line-height:1;transform:scaleX(0.9068);">Twitch Chat</div>
<div class="t" style="left:194.75px;top:539px;color:#6e6e6e;font-family:'Liberation Sans', sans-serif;font-size:8.7px;font-weight:400;letter-spacing:-0.405px;white-space:nowrap;line-height:1;transform:scaleX(0.8972);">YouTube Vid...</div>
<div class="t" style="left:87.10px;top:584px;color:#6e6e6e;font-family:'Liberation Sans', sans-serif;font-size:8.7px;font-weight:400;letter-spacing:-0.397px;white-space:nowrap;line-height:1;transform:scaleX(0.9056);">Sensor Chart</div>
<div class="t" style="left:150.85px;top:584px;color:#f4f4f4;font-family:'Liberation Sans', sans-serif;font-size:8.7px;font-weight:700;letter-spacing:-0.654px;white-space:nowrap;line-height:1;transform:scaleX(0.8849);">Volume</div>
<div class="t" style="left:207.90px;top:584px;color:#6e6e6e;font-family:'Liberation Sans', sans-serif;font-size:8.7px;font-weight:400;letter-spacing:-0.534px;white-space:nowrap;line-height:1;transform:scaleX(0.9007);">Media</div>
<div class="t" style="left:86.05px;top:629px;color:#6e6e6e;font-family:'Liberation Sans', sans-serif;font-size:8.7px;font-weight:400;letter-spacing:-0.398px;white-space:nowrap;line-height:1;transform:scaleX(0.8907);">Digital Clock 1</div>
<div class="t" style="left:140.40px;top:629px;color:#6e6e6e;font-family:'Liberation Sans', sans-serif;font-size:8.7px;font-weight:400;letter-spacing:-0.370px;white-space:nowrap;line-height:1;transform:scaleX(0.8977);">Digital Clock 2</div>
<div class="t" style="left:196.85px;top:629px;color:#6e6e6e;font-family:'Liberation Sans', sans-serif;font-size:8.7px;font-weight:400;letter-spacing:-0.443px;white-space:nowrap;line-height:1;transform:scaleX(0.8958);">Analog Clock</div>
<div class="t" style="left:85.20px;top:674px;color:#6e6e6e;font-family:'Liberation Sans', sans-serif;font-size:8.7px;font-weight:400;letter-spacing:-0.407px;white-space:nowrap;line-height:1;transform:scaleX(0.9036);">Windows No...</div>
<div class="t" style="left:147.20px;top:674px;color:#6e6e6e;font-family:'Liberation Sans', sans-serif;font-size:8.7px;font-weight:400;letter-spacing:-0.473px;white-space:nowrap;line-height:1;transform:scaleX(0.8942);">2 Sensors</div>
<div class="t" style="left:203.15px;top:674px;color:#6e6e6e;font-family:'Liberation Sans', sans-serif;font-size:8.7px;font-weight:400;letter-spacing:-0.738px;white-space:nowrap;line-height:1;transform:scaleX(0.8739);">Web URL</div>
<div class="t" style="left:102.60px;top:607px;color:#dcdcdc;font-family:'Liberation Sans', sans-serif;font-size:8.6px;font-weight:700;letter-spacing:-0.278px;white-space:nowrap;line-height:1;transform:scaleX(0.6964);">7:00</div>
<div class="t" style="left:157.96px;top:609px;color:#2a2a2a;font-family:'Liberation Sans', sans-serif;font-size:6.6px;font-weight:700;letter-spacing:0.000px;white-space:nowrap;line-height:1;">7</div>
<div class="t" style="left:162.60px;top:609px;color:#2a2a2a;font-family:'Liberation Sans', sans-serif;font-size:6.6px;font-weight:700;letter-spacing:-1.149px;white-space:nowrap;line-height:1;transform:scaleX(0.8394);">00</div>
<div class="t" style="left:212.90px;top:654px;color:#dcdcdc;font-family:'Liberation Sans', sans-serif;font-size:5.6px;font-weight:700;letter-spacing:-0.912px;white-space:nowrap;line-height:1;transform:scaleX(0.8542);">www</div>
</section>

<!-- ============ widget description ============ -->
<section>
<div class="a panel" style="left:258px;top:434px;width:302px;height:269.5px"></div>
<h2 class="t" style="left:269.00px;top:444px;color:#e6e6e6;font-family:'Liberation Sans', sans-serif;font-size:10.1px;font-weight:700;letter-spacing:-0.048px;white-space:nowrap;line-height:1;transform:scaleX(0.9897);">Contrôle du volume</h2>
<p class="t" style="left:269.00px;top:467px;color:#6c6c6c;font-family:'Liberation Sans', sans-serif;font-size:9.0px;font-weight:400;letter-spacing:-0.051px;white-space:nowrap;line-height:1;transform:scaleX(0.9850);">Affiche le contrôle du volume sur l’écran LCD</p>
</section>

<!-- ============ widget customisation ============ -->
<section>
<div class="a panel" style="left:566px;top:434px;width:269px;height:269.5px"></div>
<div class="a" style="left:577.5px;top:491px;width:246px;height:1px;background:#444"></div>
<div class="a" style="left:696px;top:470.5px;width:14.5px;height:6px;border-radius:3px;background:#484848"></div>
<div class="a" style="left:693px;top:469px;width:9px;height:9px;border-radius:50%;background:#fff"></div>
<h2 class="t" style="left:577.50px;top:444px;color:#e6e6e6;font-family:'Liberation Sans', sans-serif;font-size:10.1px;font-weight:700;letter-spacing:-0.084px;white-space:nowrap;line-height:1;transform:scaleX(0.9809);">Personnalisation des widgets</h2>
<label class="t" style="left:577.50px;top:469px;color:#e8e8e8;font-family:'Liberation Sans', sans-serif;font-size:9.5px;font-weight:400;letter-spacing:-0.205px;white-space:nowrap;line-height:1;transform:scaleX(0.9480);">Style personnalisé</label>
<p class="t" style="left:577.50px;top:505px;color:#6c6c6c;font-family:'Liberation Sans', sans-serif;font-size:9.0px;font-weight:400;letter-spacing:-0.076px;white-space:nowrap;line-height:1;transform:scaleX(0.9782);">La personnalisation des widgets est désactivée. Les</p>
<p class="t" style="left:577.50px;top:517px;color:#6c6c6c;font-family:'Liberation Sans', sans-serif;font-size:9.0px;font-weight:400;letter-spacing:-0.006px;white-space:nowrap;line-height:1;transform:scaleX(0.9984);">paramètres de personnalisation du périphérique seront</p>
<p class="t" style="left:577.50px;top:529px;color:#6c6c6c;font-family:'Liberation Sans', sans-serif;font-size:9.0px;font-weight:400;letter-spacing:-0.049px;white-space:nowrap;line-height:1;transform:scaleX(0.9852);">appliqués à la disposition des widgets.</p>
</section>

</body>
</html>
